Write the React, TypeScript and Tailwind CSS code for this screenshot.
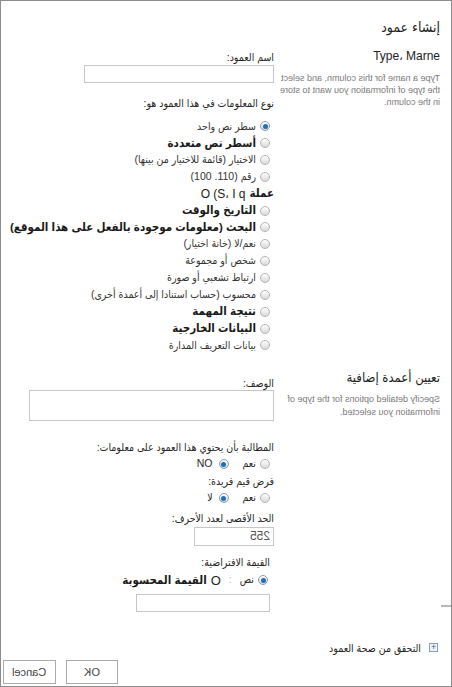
import React from 'react';

const font = "font-['Liberation_Sans','DejaVu_Sans_Condensed','DejaVu_Sans',sans-serif]";

function Radio({ checked = false }: { checked?: boolean }) {
  return (
    <span
      className={
        'flex h-[10px] w-[10px] shrink-0 items-center justify-center rounded-full border bg-gradient-to-b from-[#ffffff] to-[#d9d9d9] ' +
        (checked ? 'border-[#8d9aa6]' : 'border-[#b4b4b4]')
      }
    >
      {checked && <span className="h-[5px] w-[5px] rounded-full bg-[#1f6fb9]" />}
    </span>
  );
}

function Mirrored({ children, className = '' }: { children: React.ReactNode; className?: string }) {
  return (
    <div dir="ltr" className={'text-left [transform:scaleX(-1)] ' + className}>
      {children}
    </div>
  );
}

const types: { label: string; bold?: boolean; checked?: boolean; noRadio?: boolean }[] = [
  { label: 'سطر نص واحد', checked: true },
  { label: 'أسطر نص متعددة', bold: true },
  { label: 'الاختيار (قائمة للاختيار من بينها)' },
  { label: 'رقم (110. 100)' },
  { label: 'عملة', bold: true, noRadio: true },
  { label: 'التاريخ والوقت', bold: true },
  { label: 'البحث (معلومات موجودة بالفعل على هذا الموقع)', bold: true },
  { label: 'نعم/لا (خانة اختيار)' },
  { label: 'شخص أو مجموعة' },
  { label: 'ارتباط تشعبي أو صورة' },
  { label: 'محسوب (حساب استنادا إلى أعمدة أخرى)' },
  { label: 'نتيجة المهمة', bold: true },
  { label: 'البيانات الخارجية', bold: true },
  { label: 'بيانات التعريف المدارة' },
];

export default function App() {
  return (
    <div
      dir="rtl"
      className={'relative flex h-[687px] w-[452px] flex-col overflow-hidden border border-[#8c8c8c] bg-white text-[#262626] ' + font}
    >
      <h1 className="pr-[11px] pt-[17px] text-[14px] leading-[18px] text-[#1e1e1e]">إنشاء عمود</h1>

      {/* name and type */}
      <div className="mt-[8px] flex gap-[11px] pr-[11px]">
        <div className="w-[155px] shrink-0">
          <div dir="ltr" className="pt-[5px] text-right text-[12px] leading-[15px] text-[#222]">Type، Marne</div>
          <Mirrored className="mt-[8px] whitespace-nowrap text-[9px] leading-[12px] text-[#7a7a7a]">
            Type a name for this column, and select
            <br />
            the type of information you want to store
            <br />
            in the column.
          </Mirrored>
        </div>
        <div className="flex-1">
          <div className="pt-[6px] text-[10.5px] leading-[14px]">اسم العمود:</div>
          <div className="mt-[1px] h-[18px] w-[190px] border border-[#c6c6c6]" />
          <div className="mt-[13px] text-[10.5px] leading-[14px]">نوع المعلومات في هذا العمود هو:</div>
          <div className="mt-[8px] flex flex-col">
            {types.map((t) => (
              <div key={t.label} className="flex h-[16.85px] items-center gap-[4px] pr-[4px]">
                {!t.noRadio && <Radio checked={t.checked} />}
                <span
                  className={
                    'whitespace-nowrap ' +
                    (t.bold ? 'text-[11.5px] font-bold text-[#1a1a1a]' : 'text-[10.5px] text-[#333]') +
                    (t.noRadio ? ' -mr-[4px]' : '')
                  }
                >
                  {t.label}
                </span>
                {t.noRadio && <span dir="ltr" className="text-[12px] text-[#222]">O (S، I q</span>}
              </div>
            ))}
          </div>
        </div>
      </div>

      {/* additional settings */}
      <div className="mt-[12px] flex gap-[11px] pr-[11px]">
        <div className="w-[155px] shrink-0">
          <div className="pt-[4px] text-[13px] leading-[16px] text-[#1e1e1e]">تعيين أعمدة إضافية</div>
          <Mirrored className="mt-[7px] whitespace-nowrap text-[9px] leading-[13px] text-[#7a7a7a]">
            Specify detailed options for the type of
            <br />
            information you selected.
          </Mirrored>
        </div>
        <div className="flex-1">
          <div className="pt-[10px] text-[10.5px] leading-[14px]">الوصف:</div>
          <div className="h-[31px] w-[245px] border border-[#c6c6c6]" />

          <div className="mt-[19px] text-[10.5px] leading-[14px]">المطالبة بأن يحتوي هذا العمود على معلومات:</div>
          <div className="mt-[2px] flex h-[17px] items-center gap-[14px] pr-[4px] text-[10.5px]">
            <span className="flex items-center gap-[4px]">
              <Radio />
              <span>نعم</span>
            </span>
            <span className="flex items-center gap-[6px]">
              <Radio checked />
              <span>NO</span>
            </span>
          </div>

          <div className="mt-[1px] text-[10.5px] leading-[14px]">فرض قيم فريدة:</div>
          <div className="mt-[2px] flex h-[17px] items-center gap-[14px] pr-[4px] text-[10.5px]">
            <span className="flex items-center gap-[4px]">
              <Radio />
              <span>نعم</span>
            </span>
            <span className="flex items-center gap-[6px]">
              <Radio checked />
              <span>لا</span>
            </span>
          </div>

          <div className="mt-[4px] text-[10.5px] leading-[14px]">الحد الأقصى لعدد الأحرف:</div>
          <div className="mt-[2px] flex h-[19px] w-[80px] items-center border border-[#c6c6c6] pr-[3px]">
            <Mirrored className="text-[12px] text-[#555]">255</Mirrored>
          </div>

          <div className="pr-[4px]">
            <div className="mt-[9px] text-[10.5px] leading-[14px]">القيمة الافتراضية:</div>
            <div className="mt-[3px] flex h-[17px] items-center gap-[4px] pr-[2px]">
              <Radio checked />
              <span className="text-[10.5px]">نص</span>
              <span className="mx-[4px] text-[10.5px] text-[#bbb]">:</span>
              <span className="text-[13px]">O</span>
              <span className="text-[11.5px] font-bold text-[#1a1a1a]">القيمة المحسوبة</span>
            </div>
            <div className="mt-[5px] h-[18px] w-[134px] border border-[#c6c6c6]" />
          </div>
        </div>
      </div>

      {/* validation */}
      <div className="mt-[29px] flex items-center gap-[8px] pr-[13px] text-[10.5px] leading-[14px]">
        <span className="flex h-[9px] w-[9px] items-center justify-center border border-[#8aa0b8] bg-[#eef3f8] text-[9px] leading-none text-[#3a5f8a]">
          +
        </span>
        <span>التحقق من صحة العمود</span>
      </div>

      {/* buttons */}
      <div className="mt-[5px] flex gap-[10px] pl-[2px]">
        <div className="mr-auto flex h-[24px] w-[52px] items-center justify-center border border-[#ababab] text-[11px] text-[#444]">
          <Mirrored>OK</Mirrored>
        </div>
        <div className="flex h-[24px] w-[53px] items-center justify-center border border-[#ababab] text-[11px] text-[#444]">
          <Mirrored>Cancel</Mirrored>
        </div>
      </div>

      <div className="absolute right-0 top-[604px] h-[2px] w-[10px] bg-[#b8b8b8]" />
    </div>
  );
}
